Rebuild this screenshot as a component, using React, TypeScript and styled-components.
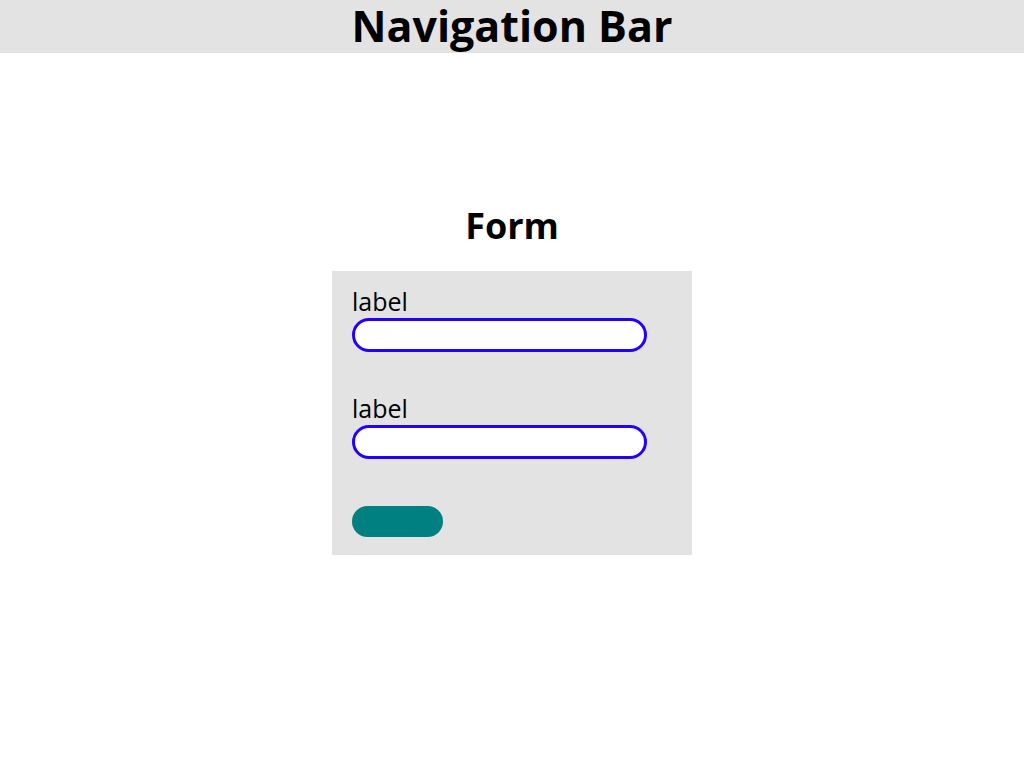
import styled, { createGlobalStyle } from "styled-components";

const GlobalStyle = createGlobalStyle`
  body {
    margin: 0;
    background: #ffffff;
    font-family: "Open Sans", "Liberation Sans", sans-serif;
    color: #000000;
  }
`;

const NavBar = styled.header`
  height: 53px;
  box-sizing: border-box;
  padding-bottom: 2px;
  background-color: #e3e3e3;
  display: flex;
  justify-content: center;
  align-items: center;
`;

const NavTitle = styled.h1`
  margin: 0;
  font-size: 43px;
  line-height: 51px;
  font-weight: 700;
`;

const Main = styled.main`
  display: flex;
  flex-direction: column;
  align-items: center;
  padding-top: 151px;
`;

const FormTitle = styled.h2`
  margin: 0 0 23px;
  font-size: 36px;
  line-height: 44px;
  font-weight: 700;
`;

const Panel = styled.form`
  width: 360px;
  box-sizing: border-box;
  background-color: #e3e3e3;
  padding: 16px 20px 18px;
  display: flex;
  flex-direction: column;
`;

const Field = styled.div<{ $gap: number }>`
  display: flex;
  flex-direction: column;
  gap: 3px;
  margin-bottom: ${(p) => p.$gap}px;
`;

const Label = styled.label`
  font-size: 25px;
  line-height: 28px;
  font-weight: 400;
`;

const Input = styled.input`
  width: 295px;
  height: 34px;
  box-sizing: border-box;
  border: 3.5px solid #2200ff;
  border-radius: 17px;
  background: #ffffff;
  outline: none;
  padding: 0 12px;
`;

const Submit = styled.button`
  width: 91px;
  height: 31px;
  border: none;
  border-radius: 16px;
  background-color: #008080;
  cursor: pointer;
`;

const App = () => {
  return (
    <>
      <GlobalStyle />
      <NavBar>
        <NavTitle>Navigation Bar</NavTitle>
      </NavBar>
      <Main>
        <FormTitle>Form</FormTitle>
        <Panel onSubmit={(e) => e.preventDefault()}>
          <Field $gap={42}>
            <Label>label</Label>
            <Input />
          </Field>
          <Field $gap={47}>
            <Label>label</Label>
            <Input />
          </Field>
          <Submit type="submit" />
        </Panel>
      </Main>
    </>
  );
};

export default App;
